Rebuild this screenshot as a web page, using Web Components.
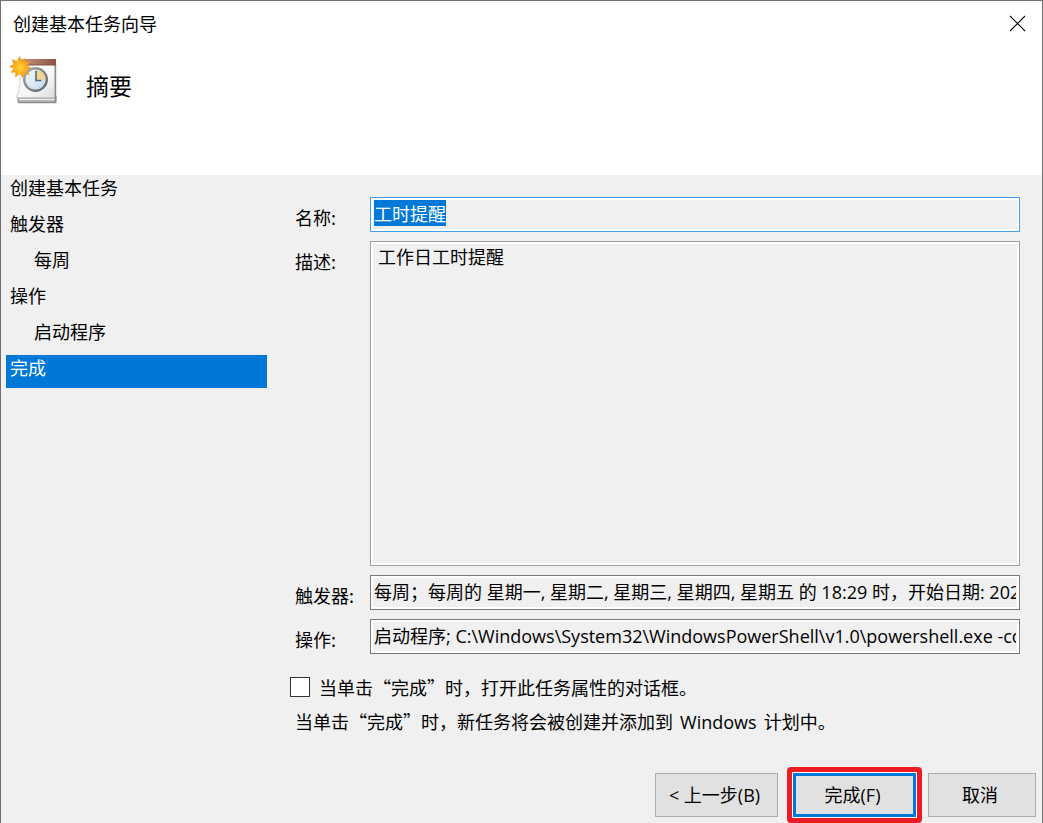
<!DOCTYPE html>
<html lang="zh-CN">
<head>
<meta charset="utf-8">
<title>创建基本任务向导</title>
<style>
html, body { margin: 0; }
body {
  font-family: "Noto Sans CJK SC", "Open Sans", sans-serif;
  font-size: 18px;
  line-height: 24px;
  color: #000;
  --latin: "Open Sans", "Noto Sans CJK SC", sans-serif;
  --face: #f0f0f0;
  --accent: #0078d7;
}
</style>
</head>
<body>
<wizard-window>
  <wizard-titlebar slot="title">创建基本任务向导</wizard-titlebar>
  <wizard-header slot="header">摘要</wizard-header>
  <wizard-steps slot="steps">
    <wizard-step>创建基本任务</wizard-step>
    <wizard-step>触发器</wizard-step>
    <wizard-step nested>每周</wizard-step>
    <wizard-step>操作</wizard-step>
    <wizard-step nested>启动程序</wizard-step>
    <wizard-step current>完成</wizard-step>
  </wizard-steps>
  <summary-form slot="form"></summary-form>
  <wizard-actions slot="actions">
    <wizard-button wide>&lt; 上一步(B)</wizard-button>
    <wizard-button wide primary>完成(F)</wizard-button>
    <wizard-button>取消</wizard-button>
  </wizard-actions>
</wizard-window>

<script>
class Base extends HTMLElement {
  constructor() {
    super();
    this.attachShadow({ mode: 'open' }).innerHTML = this.constructor.markup;
  }
}

customElements.define('wizard-window', class extends Base {
  static markup = `
    <style>
      :host { display: flex; flex-direction: column; min-height: 100vh; box-sizing: border-box;
              border: 1px solid #707070; border-bottom: 0; background: #fff; }
      .body { flex: 1; display: flex; flex-direction: column; background: var(--face); }
      .main { flex: 1; display: grid; grid-template-columns: 261px minmax(0, 1fr); gap: 23px;
              padding: 0 22px 0 5px; }
      ::slotted([slot=form]) { padding-top: 22px; }
    </style>
    <slot name="title"></slot>
    <slot name="header"></slot>
    <div class="body">
      <div class="main"><slot name="steps"></slot><slot name="form"></slot></div>
      <slot name="actions"></slot>
    </div>`;
});

customElements.define('wizard-titlebar', class extends Base {
  static markup = `
    <style>
      :host { display: flex; justify-content: space-between; align-items: center; height: 44px; padding: 0 16px 0 12px; }
      button { display: flex; padding: 0; border: 0; background: none; }
    </style>
    <span><slot></slot></span>
    <button type="button" aria-label="关闭">
      <svg width="17" height="17" viewBox="0 0 17 17"><path d="M1 1 16 16M16 1 1 16" stroke="#000" stroke-width="1.1" fill="none"/></svg>
    </button>`;
});

customElements.define('wizard-header', class extends Base {
  static markup = `
    <style>
      :host { display: flex; gap: 26px; padding: 10px 7px 68px; }
      h1 { margin: 0; padding-top: 14px; font-size: 23px; line-height: 32px; font-weight: 400; }
      svg { flex: none; }
    </style>
    <svg width="52" height="52" viewBox="0 0 52 52" aria-hidden="true">
      <defs>
        <linearGradient id="paper" x2="1" y2="1"><stop offset="0" stop-color="#fff"/><stop offset=".6" stop-color="#f6f6f6"/><stop offset="1" stop-color="#ddd"/></linearGradient>
        <linearGradient id="strip" x2="1" y2="0"><stop offset="0" stop-color="#c59a86"/><stop offset="1" stop-color="#8c5141"/></linearGradient>
        <linearGradient id="rim" x2="1" y2="1"><stop offset="0" stop-color="#a4a8ab"/><stop offset="1" stop-color="#63676b"/></linearGradient>
        <linearGradient id="face" x2="1" y2="1"><stop offset="0" stop-color="#f6fbff"/><stop offset="1" stop-color="#c3d9ec"/></linearGradient>
        <radialGradient id="sun"><stop offset="0" stop-color="#ffd23c"/><stop offset="1" stop-color="#f89407"/></radialGradient>
      </defs>
      <path d="M10 41H48V47.500H10Z" fill="#b8b8b8" stroke="#858585"/>
      <path d="M11 44.500H46.500" stroke="#eee"/>
      <path d="M12 10H46.500V42.500H8Q11 38 12 30Z" fill="url(#paper)" stroke="#c2c2c2" stroke-width=".7"/>
      <path d="M47.500 10V47.500H11" fill="none" stroke="#8a8a8a" stroke-width="1.400"/>
      <path d="M12 4H48V10H12Z" fill="url(#strip)"/><path d="M12 10H48" stroke="#7b493d" stroke-width=".8"/>
      <circle cx="27.500" cy="24.500" r="11.300" fill="url(#face)" stroke="url(#rim)" stroke-width="2.400"/>
      <path d="M27.500 24.500V14.700A9.800 9.800 0 0 1 37.300 24.500Z" fill="#f3d58b"/>
      <circle cx="27.500" cy="24.500" r="8.800" fill="none" stroke="#acb9c3" stroke-width=".8" stroke-dasharray=".8 3.800"/>
      <path d="M28 16V25.500H33.500" fill="none" stroke="#526c83" stroke-width="1.600"/>
      <path d="M11.500 1.500 13.500 6 17 3.500 16.700 7.500 22 6.500 18.500 10.500 23 13 18.500 14.500 21.500 19.500 16.500 17.500 15 23 12 18.500 7.500 22 7.800 17 3 17.500 6 13.500 1.500 11.500 6 9.500 4 4.500 9 6.500Z" fill="url(#sun)" stroke="#f79b12" stroke-width=".6"/>
    </svg>
    <h1><slot></slot></h1>`;
});

customElements.define('wizard-steps', class extends Base {
  static markup = `
    <style>:host { display: flex; flex-direction: column; gap: 4px; }</style>
    <slot></slot>`;
  connectedCallback() { this.setAttribute('role', 'list'); }
});

customElements.define('wizard-step', class extends Base {
  static markup = `
    <style>
      :host { display: block; box-sizing: border-box; height: 32px; padding-left: 4px; }
      :host([nested]) { padding-left: 28px; }
      :host([current]) { background: var(--accent); color: #fff; height: 33px; }
    </style>
    <slot></slot>`;
  connectedCallback() { this.setAttribute('role', 'listitem'); }
});

customElements.define('summary-form', class extends Base {
  static markup = `
    <style>
      :host { display: flex; flex-direction: column; min-width: 0; }
      .fields { flex: 1; display: grid; grid-template-columns: 75px minmax(0, 1fr);
                grid-template-rows: 35px minmax(120px, 1fr) 35px 35px; row-gap: 9px; padding-left: 5px; }
      .fields label { padding-top: 8px; }
      input, textarea { font-family: var(--latin); font-size: 18px; line-height: 24px; color: #000; }
      .field { box-sizing: border-box; width: 100%; margin: 0; border: 1px solid #7a7a7a; border-radius: 0;
               background: var(--face); box-shadow: inset 0 0 0 2px #fff; outline: 0; }
      input.field { height: 35px; padding: 0 3px 4px; }
      #name.field { border-color: #4a9de8; }
      #desc.field { height: 100%; padding: 3px 7px; resize: none; border-color: #a0a0a0; }
      ::selection { background: var(--accent); color: #fff; }
      .open { display: flex; align-items: center; gap: 9px; margin-top: 21px; }
      .open input { appearance: none; width: 20px; height: 20px; margin: 0; border: 1px solid #333; background: #fff; }
      p { margin: 10px 0 0; padding-left: 5px; }
      .latin { font-family: var(--latin); padding: 0 3px; }
    </style>
    <div class="fields">
      <label for="name">名称:</label>
      <input class="field" id="name" value="工时提醒" readonly>
      <label for="desc">描述:</label>
      <textarea class="field" id="desc" readonly>工作日工时提醒</textarea>
      <label for="trigger">触发器:</label>
      <input class="field" id="trigger" readonly value="每周；每周的 星期一, 星期二, 星期三, 星期四, 星期五 的 18:29 时，开始日期: 202">
      <label for="action">操作:</label>
      <input class="field" id="action" readonly value="启动程序; C:\\Windows\\System32\\WindowsPowerShell\\v1.0\\powershell.exe -co">
    </div>
    <div class="open"><input type="checkbox" id="open"><label for="open">当单击“完成”时，打开此任务属性的对话框。</label></div>
    <p>当单击“完成”时，新任务将会被创建并添加到 <span class="latin">Windows</span> 计划中。</p>`;
  connectedCallback() {
    const name = this.shadowRoot.getElementById('name');
    name.focus();
    name.select();
  }
});

customElements.define('wizard-actions', class extends Base {
  static markup = `
    <style>:host { display: flex; justify-content: flex-end; align-items: center; gap: 6px; padding: 33px 6px 0; }</style>
    <slot></slot>`;
});

customElements.define('wizard-button', class extends Base {
  static markup = `
    <style>
      :host { display: block; padding: 0 3px; margin: 0 -3px; }
      :host([wide]) { margin: 0; }
      :host([primary]) { padding: 1px; border: 5px solid #ed1c24; border-radius: 4px; margin: 0; background: #fff; }
      button { display: block; box-sizing: border-box; width: 108px; height: 44px; padding: 0 4px 0 0; border: 1px solid #adadad;
               background: #e1e1e1; color: #000; font: inherit; font-family: var(--latin); }
      :host([wide]) button { width: 123px; }
      :host([primary]) button { border: 3px solid var(--accent); }
    </style>
    <button type="button"><slot></slot></button>`;
});
</script>
</body>
</html>
